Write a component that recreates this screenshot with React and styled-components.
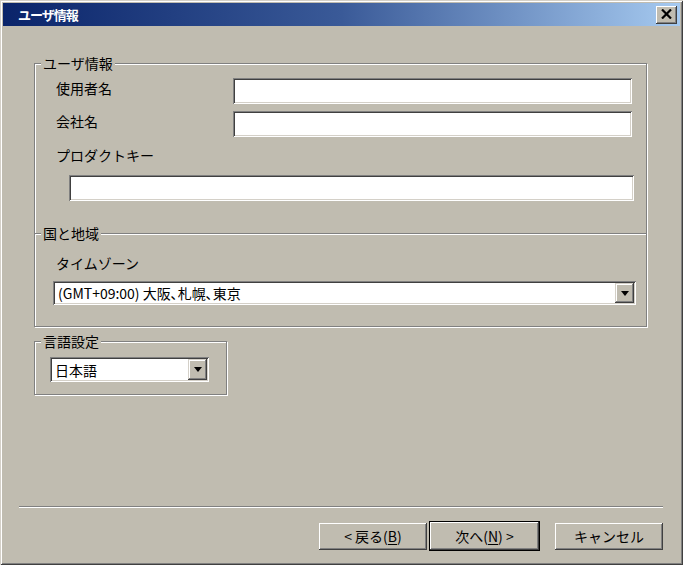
import React from "react";
import styled, { createGlobalStyle } from "styled-components";

const FACE = "#c0bcb0";
const FONT = `"MS UI Gothic", "Noto Sans CJK JP", "Noto Sans", sans-serif`;

const Global = createGlobalStyle`
  html, body { margin: 0; padding: 0; background: ${FACE}; }
  body { font-family: ${FONT}; font-size: 14px; color: #000; }
  * { box-sizing: border-box; }
`;

const Window = styled.div`
  width: 683px;
  height: 565px;
  padding: 3px;
  background: ${FACE};
  box-shadow: inset 1px 1px #d4d0c8, inset -1px -1px #404040,
    inset 2px 2px #ffffff, inset -2px -2px #808080;
  display: flex;
  flex-direction: column;
`;

const TitleBar = styled.div`
  height: 23px;
  flex: none;
  display: flex;
  align-items: center;
  padding: 0 3px 0 15px;
  background: linear-gradient(to right, #0a246a 0%, #3a5a98 50%, #a6caf0 100%);
`;

const Title = styled.span`
  flex: 1;
  color: #fff;
  font-weight: bold;
  font-size: 13px;
  line-height: 16px;
  letter-spacing: -1px;
`;

const CloseBtn = styled.div`
  width: 21px;
  height: 18px;
  background: ${FACE};
  box-shadow: inset -1px -1px #404040, inset 1px 1px #ffffff,
    inset -2px -2px #808080;
  display: flex;
  align-items: center;
  justify-content: center;
  padding-bottom: 1px;
`;

const Body = styled.div`
  flex: 1;
  display: flex;
  flex-direction: column;
  padding: 37px 33px 0 31px;
`;

const Group = styled.div`
  position: relative;
  border: 1px solid #808080;
  border-bottom: ${(p) => (p.$open ? "none" : "1px solid #808080")};
  box-shadow: inset 1px 1px #fff, 1px 1px #fff;
  padding: ${(p) => p.$pad};
  width: ${(p) => p.$width || "auto"};
  margin-top: ${(p) => p.$mt || "0"};
`;

const Legend = styled.span`
  position: absolute;
  top: -9px;
  left: 6px;
  padding: 0 2px;
  background: ${FACE};
  line-height: 16px;
  font-size: 14px;
`;

const FormGrid = styled.div`
  display: grid;
  grid-template-columns: 177px 399px;
  row-gap: 7px;
  align-items: start;
`;

const Label = styled.div`
  line-height: 16px;
  font-size: 14px;
  margin-left: ${(p) => p.$ml || "0"};
  margin-top: ${(p) => p.$mt || "0"};
`;

const GridLabel = styled(Label)`
  margin-top: 2px;
`;

const TextBox = styled.div`
  height: 26px;
  background: #fff;
  box-shadow: inset 1px 1px #808080, inset -1px -1px #ffffff,
    inset 2px 2px #404040, inset -2px -2px #d4d0c8;
  margin-left: ${(p) => p.$ml || "0"};
  margin-top: ${(p) => p.$mt || "0"};
`;

const Combo = styled.div`
  height: ${(p) => p.$h}px;
  width: ${(p) => p.$w || "auto"};
  margin-top: ${(p) => p.$mt || "0"};
  background: #fff;
  box-shadow: inset 1px 1px #808080, inset -1px -1px #ffffff,
    inset 2px 2px #404040, inset -2px -2px #d4d0c8;
  padding: 2px;
  display: flex;
  align-items: stretch;
`;

const ComboText = styled.div`
  flex: 1;
  padding-left: 3px;
  display: flex;
  align-items: center;
  font-size: 14px;
  line-height: 16px;
  white-space: nowrap;
`;

const DropBtn = styled.div`
  width: 19px;
  background: ${FACE};
  box-shadow: inset -1px -1px #404040, inset 1px 1px #d4d0c8,
    inset -2px -2px #808080, inset 2px 2px #ffffff;
  display: flex;
  align-items: center;
  justify-content: center;
`;

const Arrow = () => (
  <svg width="8" height="5" viewBox="0 0 8 5">
    <path d="M0 0h8L4 5z" fill="#000" />
  </svg>
);

const Spacer = styled.div`
  flex: 1;
`;

const Separator = styled.div`
  height: 2px;
  margin: 0 -16px 0 -15px;
  border-top: 1px solid #808080;
  border-bottom: 1px solid #ffffff;
`;

const ButtonRow = styled.div`
  display: flex;
  justify-content: flex-end;
  align-items: center;
  padding: 13px 17px 11px 0;
  margin-right: -33px;
`;

const Button = styled.div`
  width: ${(p) => (p.$default ? "111px" : "108px")};
  height: ${(p) => (p.$default ? "30px" : "27px")};
  margin-left: ${(p) => p.$ml || "0"};
  background: ${FACE};
  border: ${(p) => (p.$default ? "1px solid #000" : "none")};
  box-shadow: inset -1px -1px #404040, inset 1px 1px #ffffff,
    inset -2px -2px #808080;
  display: flex;
  align-items: center;
  justify-content: center;
  font-size: 14px;
  line-height: 16px;
  u { text-decoration: underline; text-underline-offset: 2px; }
`;

export default function App() {
  return (
    <>
      <Global />
      <Window>
        <TitleBar>
          <Title>ユーザ情報</Title>
          <CloseBtn>
            <svg width="11" height="10" viewBox="0 0 11 10">
              <path d="M1 0.5L10 9.5M10 0.5L1 9.5" stroke="#000" strokeWidth="2.2" />
            </svg>
          </CloseBtn>
        </TitleBar>
        <Body>
          <Group $open $pad="14px 12px 32px 21px">
            <Legend>ユーザ情報</Legend>
            <FormGrid>
              <GridLabel>使用者名</GridLabel>
              <TextBox />
              <GridLabel>会社名</GridLabel>
              <TextBox />
            </FormGrid>
            <Label $mt="10px">プロダクトキー</Label>
            <TextBox $ml="13px" $mt="12px" />
          </Group>
          <Group $pad="21px 10px 21px 18px">
            <Legend>国と地域</Legend>
            <Label $ml="3px">タイムゾーン</Label>
            <Combo $h={24} $mt="10px">
              <ComboText>(GMT+09:00) 大阪､札幌､東京</ComboText>
              <DropBtn>
                <Arrow />
              </DropBtn>
            </Combo>
          </Group>
          <Group $width="193px" $mt="14px" $pad="15px 17px 12px 15px">
            <Legend>言語設定</Legend>
            <Combo $h={25}>
              <ComboText>日本語</ComboText>
              <DropBtn>
                <Arrow />
              </DropBtn>
            </Combo>
          </Group>
          <Spacer />
          <Separator />
          <ButtonRow>
            <Button>
              &lt;&nbsp;戻る(<u>B</u>)
            </Button>
            <Button $default $ml="2px">
              次へ(<u>N</u>)&nbsp;&gt;
            </Button>
            <Button $ml="15px">キャンセル</Button>
          </ButtonRow>
        </Body>
      </Window>
    </>
  );
}
